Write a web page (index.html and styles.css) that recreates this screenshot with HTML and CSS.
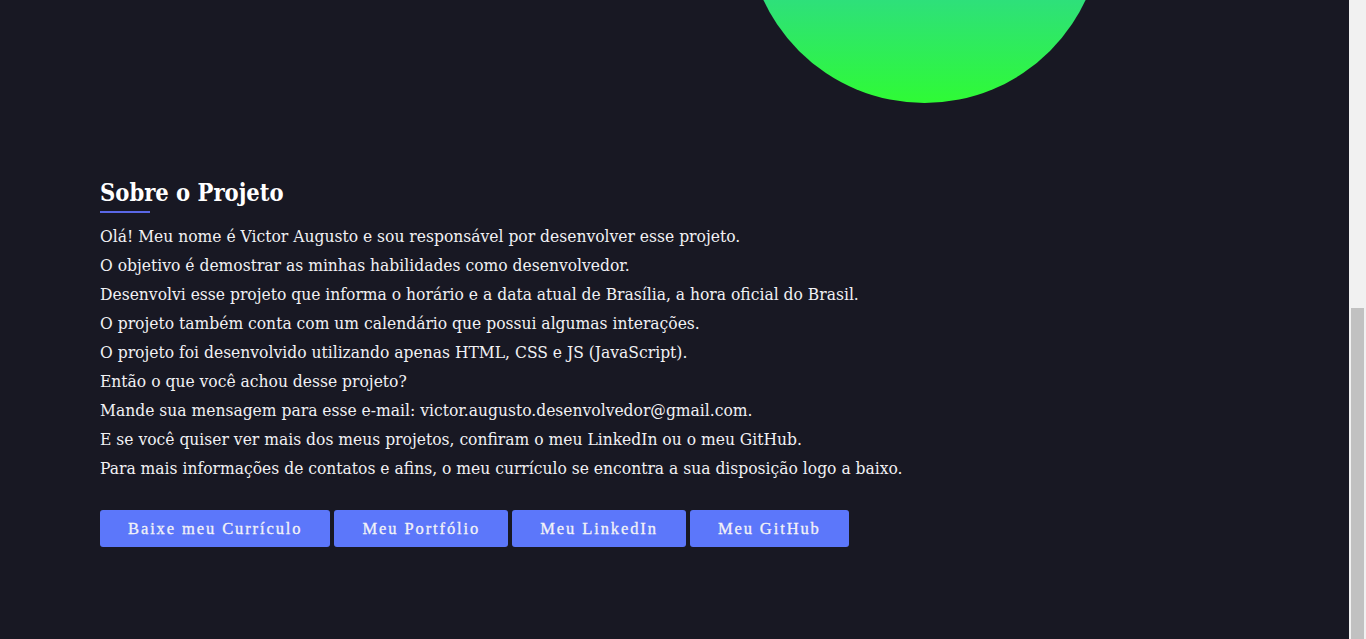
FILE: index.html
```html
<!DOCTYPE html>
<html lang="pt-BR">
<head>
<meta charset="utf-8">
<title>Sobre o Projeto</title>
<link rel="stylesheet" href="styles.css">
</head>
<body>
<div class="page">
  <main class="content">
    <header class="hero">
      <div class="orb"></div>
    </header>
    <section class="about">
      <h2 class="about-title">Sobre o Projeto</h2>
      <div class="about-text">
        <p>Olá! Meu nome é Victor Augusto e sou responsável por desenvolver esse projeto.</p>
        <p>O objetivo é demostrar as minhas habilidades como desenvolvedor.</p>
        <p>Desenvolvi esse projeto que informa o horário e a data atual de Brasília, a hora oficial do Brasil.</p>
        <p>O projeto também conta com um calendário que possui algumas interações.</p>
        <p>O projeto foi desenvolvido utilizando apenas HTML, CSS e JS (JavaScript).</p>
        <p>Então o que você achou desse projeto?</p>
        <p>Mande sua mensagem para esse e-mail: victor.augusto.desenvolvedor@gmail.com.</p>
        <p>E se você quiser ver mais dos meus projetos, confiram o meu LinkedIn ou o meu GitHub.</p>
        <p>Para mais informações de contatos e afins, o meu currículo se encontra a sua disposição logo a baixo.</p>
      </div>
      <div class="actions">
        <a class="btn" href="#">Baixe meu Currículo</a>
        <a class="btn" href="#">Meu Portfólio</a>
        <a class="btn" href="#">Meu LinkedIn</a>
        <a class="btn" href="#">Meu GitHub</a>
      </div>
    </section>
  </main>
  <div class="scrollbar" aria-hidden="true"><div class="scrollbar-thumb"></div></div>
</div>
</body>
</html>
```

FILE: styles.css
```css
html, body {
  margin: 0;
  padding: 0;
  height: 639px;
  overflow: hidden;
  background: #181823;
}
body {
  font-family: "DejaVu Serif Condensed", "DejaVu Serif", serif;
  font-stretch: condensed;
  color: #f1f1f4;
}
.page {
  display: flex;
  height: 639px;
}
.content {
  flex: 1;
  min-width: 0;
}
.scrollbar {
  width: 17px;
  background: #f1f1f1;
  display: flex;
  flex-direction: column;
  justify-content: flex-end;
  padding: 0 2px;
  box-sizing: border-box;
}
.scrollbar-thumb {
  height: 331px;
  background: #c1c1c1;
}
.hero {
  height: 140px;
  overflow: hidden;
  display: flex;
  justify-content: flex-end;
  align-items: flex-end;
  padding: 0 247px 37px 0;
  box-sizing: border-box;
}
.orb {
  flex: none;
  width: 355px;
  height: 355px;
  border-radius: 50%;
  background: linear-gradient(180deg, #2bb0c8 0%, #2dd98a 62%, #2ee07a 71%, #2ffb35 100%);
}
.about {
  padding: 37px 100px 0;
}
.about-title {
  margin: 0;
  font-size: 23.5px;
  line-height: 32px;
  font-weight: bold;
  color: #ffffff;
}
.about-title::after {
  content: "";
  display: block;
  width: 50px;
  height: 2px;
  margin-top: 2px;
  background: #5a67e6;
}
.about-text {
  margin-top: 9px;
  font-size: 17.3px;
  line-height: 29px;
}
.about-text p {
  margin: 0;
}
.actions {
  margin-top: 27px;
  display: flex;
  gap: 4px;
}
.btn {
  display: block;
  height: 37px;
  line-height: 37px;
  padding: 0 28px;
  border-radius: 3px;
  background: #5c77fa;
  color: #f2f2f7;
  text-decoration: none;
  font-family: "Liberation Serif", serif;
  font-size: 16.5px;
  letter-spacing: 1.9px;
  -webkit-text-stroke: 0.3px #f2f2f7;
}
```
